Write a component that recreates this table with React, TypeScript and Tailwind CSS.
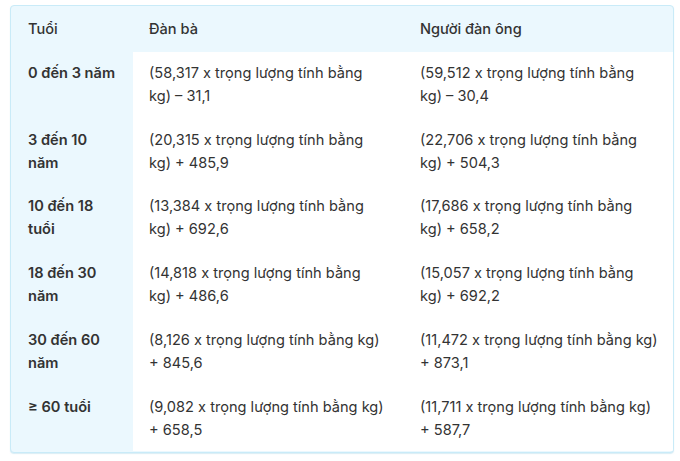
const rows = [
  {
    age: ["0 đến 3 năm"],
    female: ["(58,317 x trọng lượng tính bằng", "kg) – 31,1"],
    male: ["(59,512 x trọng lượng tính bằng", "kg) – 30,4"],
    h: "h-[67px]",
  },
  {
    age: ["3 đến 10", "năm"],
    female: ["(20,315 x trọng lượng tính bằng", "kg) + 485,9"],
    male: ["(22,706 x trọng lượng tính bằng", "kg) + 504,3"],
    h: "h-[66px]",
  },
  {
    age: ["10 đến 18", "tuổi"],
    female: ["(13,384 x trọng lượng tính bằng", "kg) + 692,6"],
    male: ["(17,686 x trọng lượng tính bằng", "kg) + 658,2"],
    h: "h-[67px]",
  },
  {
    age: ["18 đến 30", "năm"],
    female: ["(14,818 x trọng lượng tính bằng", "kg) + 486,6"],
    male: ["(15,057 x trọng lượng tính bằng", "kg) + 692,2"],
    h: "h-[67px]",
  },
  {
    age: ["30 đến 60", "năm"],
    female: ["(8,126 x trọng lượng tính bằng kg)", "+ 845,6"],
    male: ["(11,472 x trọng lượng tính bằng kg)", "+ 873,1"],
    h: "h-[67px]",
  },
  {
    age: ["≥ 60 tuổi"],
    female: ["(9,082 x trọng lượng tính bằng kg)", "+ 658,5"],
    male: ["(11,711 x trọng lượng tính bằng kg)", "+ 587,7"],
    h: "h-[65px]",
  },
];

function Lines({ lines }: { lines: string[] }) {
  return (
    <>
      {lines.map((l, i) => (
        <div key={i} className="whitespace-nowrap">
          {l}
        </div>
      ))}
    </>
  );
}

export default function App() {
  return (
    <div
      className="w-[680px] h-[461px] bg-white pt-[5px] pl-[10px]"
      style={{ fontFamily: "Inter, 'Noto Sans', sans-serif" }}
    >
      <div className="w-[664px] h-[448px] border border-[#c9ebf8] rounded-[4px] overflow-hidden bg-[#ebf8fe] text-[14.6px] leading-[23px] text-[#333333] shadow-[0_1px_1px_rgba(180,220,235,0.5)]">
        {/* header */}
        <div className="flex h-[46px] items-center font-medium">
          <div className="w-[122px] pl-[17px]">Tuổi</div>
          <div className="w-[271px] pl-[16px]">Đàn bà</div>
          <div className="flex-1 pl-[16px]">Người đàn ông</div>
        </div>

        {rows.map((r, i) => (
          <div key={i} className={`flex ${r.h}`}>
            <div className="w-[122px] pl-[17px] pt-[10px] font-semibold">
              <Lines lines={r.age} />
            </div>
            <div className="w-[271px] pl-[16px] pt-[10px] bg-white">
              <Lines lines={r.female} />
            </div>
            <div className="flex-1 pl-[16px] pt-[10px] bg-white">
              <Lines lines={r.male} />
            </div>
          </div>
        ))}
      </div>
    </div>
  );
}
